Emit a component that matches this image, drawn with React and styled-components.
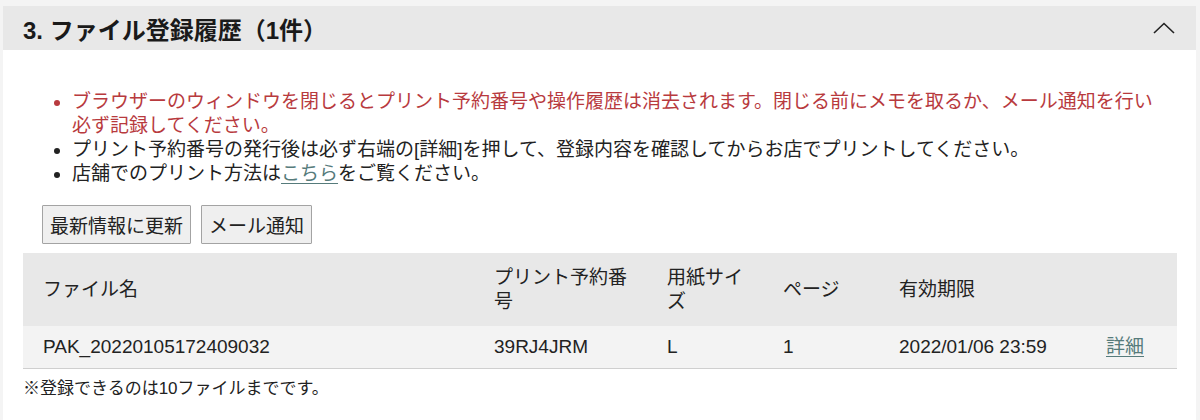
import React from "react";
import styled, { createGlobalStyle } from "styled-components";

const GlobalStyle = createGlobalStyle`
  body {
    margin: 0;
    padding: 6px 4px 0 3px;
    background: #f4f4f4;
    font-family: "Liberation Sans", "Noto Sans CJK JP", sans-serif;
    color: #222;
  }
`;

const rows = [
  {
    name: "PAK_20220105172409032",
    code: "39RJ4JRM",
    size: "L",
    pages: "1",
    expires: "2022/01/06 23:59",
  },
];

const Panel = styled.section`
  background: #fff;
  min-height: 420px;
`;

const Header = styled.header`
  display: flex;
  align-items: center;
  justify-content: space-between;
  height: 44px;
  padding: 0 21px 0 20px;
  background: #e8e8e8;
`;

const Title = styled.h2`
  margin: 0;
  font-size: 24px;
  font-weight: bold;
  color: #1a1a1a;
`;

const Body = styled.div`
  padding: 0 18px 0 20px;
`;

const Notes = styled.ul`
  margin: 40px 0 19px;
  padding: 0 12px 0 49px;
  font-size: 19px;
  line-height: 24px;
`;

const Note = styled.li`
  color: ${(p) => (p.$warn ? "#b83a3e" : "#222")};
`;

const TextLink = styled.a`
  color: #567b7b;
  text-decoration: underline;
  text-underline-offset: 3px;
`;

const Actions = styled.div`
  display: flex;
  gap: 10px;
  padding-left: 19px;
  margin-bottom: 9px;
`;

const Button = styled.button`
  height: 39px;
  padding: 0 7px;
  font-family: inherit;
  font-size: 19px;
  color: #222;
  background: #efefef;
  border: 1px solid #a3a3a3;
  border-radius: 1px;
`;

const Table = styled.table`
  width: 1154px;
  border-collapse: collapse;
  table-layout: fixed;
  font-size: 19px;
  line-height: 24px;
`;

const HeadRow = styled.tr`
  height: 73px;
  background: #e8e8e8;
`;

const Row = styled.tr`
  height: 42px;
  background: #f3f3f3;
  border-bottom: 1px solid #cfcfcf;
`;

const Th = styled.th`
  box-sizing: border-box;
  width: ${(p) => p.$w}px;
  padding: 0 15px 0 20px;
  text-align: left;
  font-weight: normal;
  vertical-align: middle;
`;

const Td = styled.td`
  padding: 0 15px 0 20px;
  vertical-align: middle;
`;

const Footnote = styled.p`
  margin: 8px 0 0;
  font-size: 17px;
  line-height: 24px;
`;

const Chevron = () => (
  <svg width="22" height="12" viewBox="0 0 22 12" fill="none">
    <polyline points="1,11 11,1.5 21,11" stroke="#222" strokeWidth="1.6" />
  </svg>
);

export default function App() {
  return (
    <>
      <GlobalStyle />
      <Panel>
        <Header>
          <Title>3. ファイル登録履歴（1件）</Title>
          <Chevron />
        </Header>
        <Body>
          <Notes>
            <Note $warn>
              ブラウザーのウィンドウを閉じるとプリント予約番号や操作履歴は消去されます。閉じる前にメモを取るか、メール通知を行い必ず記録してください。
            </Note>
            <Note>
              プリント予約番号の発行後は必ず右端の[詳細]を押して、登録内容を確認してからお店でプリントしてください。
            </Note>
            <Note>
              店舗でのプリント方法は<TextLink href="#">こちら</TextLink>をご覧ください。
            </Note>
          </Notes>
          <Actions>
            <Button>最新情報に更新</Button>
            <Button>メール通知</Button>
          </Actions>
          <Table>
            <thead>
              <HeadRow>
                <Th $w={451}>ファイル名</Th>
                <Th $w={173}>プリント予約番号</Th>
                <Th $w={116}>用紙サイズ</Th>
                <Th $w={116}>ページ</Th>
                <Th $w={207}>有効期限</Th>
                <Th $w={91}></Th>
              </HeadRow>
            </thead>
            <tbody>
              {rows.map((r) => (
                <Row key={r.code}>
                  <Td>{r.name}</Td>
                  <Td>{r.code}</Td>
                  <Td>{r.size}</Td>
                  <Td>{r.pages}</Td>
                  <Td>{r.expires}</Td>
                  <Td>
                    <TextLink href="#">詳細</TextLink>
                  </Td>
                </Row>
              ))}
            </tbody>
          </Table>
          <Footnote>※登録できるのは10ファイルまでです。</Footnote>
        </Body>
      </Panel>
    </>
  );
}
